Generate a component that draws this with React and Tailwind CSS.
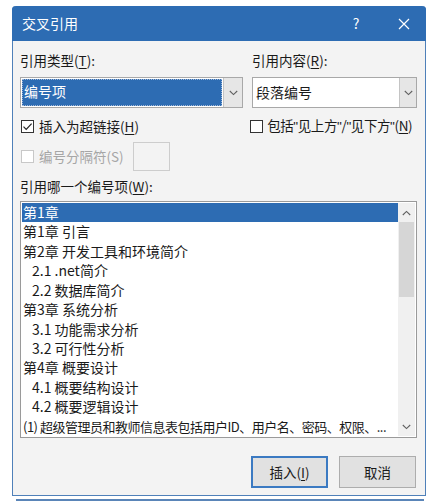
import React from "react";

const F = { fontFamily: '"Noto Sans CJK SC", "Noto Sans", sans-serif' };
const Q = ({ children }) => (
  <span style={{ fontFamily: '"Liberation Sans", sans-serif' }}>{children}</span>
);

function Chevron({ className = "" }) {
  return (
    <svg width="9" height="6" viewBox="0 0 9 6" className={className}>
      <path d="M0.8 1 L4.5 4.6 L8.2 1" fill="none" stroke="#606060" strokeWidth="1.1" />
    </svg>
  );
}

function U({ children }) {
  return <span className="underline underline-offset-2">{children}</span>;
}

function CheckBox({ checked, disabled }) {
  return (
    <div
      className={
        "shrink-0 w-[13px] h-[13px] border bg-white flex items-center justify-center " +
        (disabled ? "border-[#c8c8c8]" : "border-[#333333]")
      }
    >
      {checked && (
        <svg width="11" height="11" viewBox="0 0 11 11">
          <path d="M1.5 5.6 L4.2 8.3 L9.6 2.6" fill="none" stroke="#222" strokeWidth="1.2" />
        </svg>
      )}
    </div>
  );
}

const items = [
  { t: "第1章", sel: true },
  { t: "第1章 引言" },
  { t: "第2章 开发工具和环境简介" },
  { t: "2.1 .net简介", ind: true },
  { t: "2.2 数据库简介", ind: true },
  { t: "第3章 系统分析" },
  { t: "3.1 功能需求分析", ind: true },
  { t: "3.2 可行性分析", ind: true },
  { t: "第4章 概要设计" },
  { t: "4.1 概要结构设计", ind: true },
  { t: "4.2 概要逻辑设计", ind: true },
  { t: "(1) 超级管理员和教师信息表包括用户ID、用户名、密码、权限、...", last: true },
];

export default function App() {
  return (
    <div className="w-[435px] h-[504px] bg-white overflow-hidden text-[#1a1a1a]" style={F}>
      <div className="ml-[12px] mt-[6px] w-[414px] h-[490px] border border-t-0 border-[#4f80b9] rounded-t-[4px] bg-[#f3f3f3] flex flex-col">
        {/* title bar */}
        <div className="h-[35px] bg-[#2d6cb3] rounded-t-[4px] flex items-center text-white text-[14px] -mx-px">
          <div className="pl-[10px] flex-1">交叉引用</div>
          <div className="w-[20px] text-center text-[14px] mr-[28px]">?</div>
          <div className="w-[20px] flex justify-center mr-[12px]">
            <svg width="12" height="12" viewBox="0 0 12 12">
              <path d="M1 1 L11 11 M11 1 L1 11" stroke="white" strokeWidth="1.2" />
            </svg>
          </div>
        </div>

        {/* body */}
        <div className="pl-[7px] pr-[8px] pt-[9px] text-[13.5px] flex flex-col">
          <div className="flex gap-[9px]">
            <div className="w-[223px] flex flex-col">
              <div className="h-[20px] leading-[20px]">
                引用类型(<U>T</U>):
              </div>
              <div className="mt-[7px] h-[31px] border border-[#a8a8a8] bg-white flex">
                <div className="flex-1 p-[1px] flex">
                  <div className="flex-1 bg-[#2d6cb3] border border-dotted border-[#9fb6d6] text-white leading-[22px] pl-[1px] text-[14px]">
                    编号项
                  </div>
                </div>
                <div className="w-[19px] bg-[#e6e6e6] border-l border-[#c4c4c4] flex items-center justify-center">
                  <Chevron />
                </div>
              </div>
            </div>
            <div className="w-[165px] flex flex-col">
              <div className="h-[20px] leading-[20px]">
                引用内容(<U>R</U>):
              </div>
              <div className="mt-[7px] h-[31px] border border-[#a8a8a8] bg-white flex">
                <div className="flex-1 pl-[3px] leading-[29px] text-[14px]">段落编号</div>
                <div className="w-[17px] bg-[#e6e6e6] border-l border-[#c4c4c4] flex items-center justify-center">
                  <Chevron />
                </div>
              </div>
            </div>
          </div>

          {/* checkbox row */}
          <div className="flex gap-[9px] mt-[8px] h-[20px] items-center">
            <div className="w-[223px] flex items-center gap-[5px] pl-[1px]">
              <CheckBox checked />
              <span>
                插入为超链接(<U>H</U>)
              </span>
            </div>
            <div className="w-[170px] flex items-center gap-[4px] pl-[1px] whitespace-nowrap">
              <CheckBox />
              <span className="tracking-[-0.4px]">
                包括<Q>"</Q>见上方<Q>"</Q>/<Q>"</Q>见下方<Q>"</Q>(<U>N</U>)
              </span>
            </div>
          </div>

          {/* disabled row */}
          <div className="flex items-center mt-[6px] h-[29px] pl-[1px]">
            <CheckBox disabled />
            <span className="ml-[5px] text-[#a6a6a6]">编号分隔符(S)</span>
            <div className="ml-[9px] w-[37px] h-[29px] border border-[#cdcdcd] bg-[#f3f3f3]" />
          </div>

          <div className="mt-[5px] h-[20px] leading-[20px]">
            引用哪一个编号项(<U>W</U>):
          </div>

          {/* list */}
          <div className="mt-[5px] h-[237px] border border-[#9a9a9a] bg-white p-[1px] flex">
            <div className="flex-1 min-w-0 flex flex-col text-[14px]">
              {items.map((it, i) => (
                <div
                  key={i}
                  className={
                    "h-[19.5px] leading-[19.5px] whitespace-nowrap overflow-hidden " +
                    (it.sel ? "bg-[#2d6cb3] text-white " : "") +
                    (it.ind ? "pl-[10px] " : "pl-[1px] ") +
                    (it.last ? "text-[13px] tracking-[-0.5px]" : "")
                  }
                >
                  {it.t}
                </div>
              ))}
            </div>
            <div className="shrink-0 w-[17px] bg-[#f0f0f0] flex flex-col">
              <div className="h-[19px] flex items-center justify-center">
                <Chevron className="rotate-180" />
              </div>
              <div className="mx-[1px] h-[75px] bg-[#d6d6d6]" />
              <div className="flex-1" />
              <div className="h-[19px] flex items-center justify-center">
                <Chevron />
              </div>
            </div>
          </div>

          {/* buttons */}
          <div className="mt-[18px] flex justify-end gap-[11px] pr-[1px]">
            <div className="w-[77px] h-[32px] border-2 border-[#3b7ac2] bg-[#e1e1e1] flex items-center justify-center">
              插入(<U>I</U>)
            </div>
            <div className="w-[77px] h-[32px] border border-[#adadad] bg-[#e1e1e1] flex items-center justify-center">
              取消
            </div>
          </div>
        </div>
      </div>
      <div className="ml-[16px] mt-[3px] w-[408px] h-[2px] bg-[#5a85b8]" />
    </div>
  );
}
